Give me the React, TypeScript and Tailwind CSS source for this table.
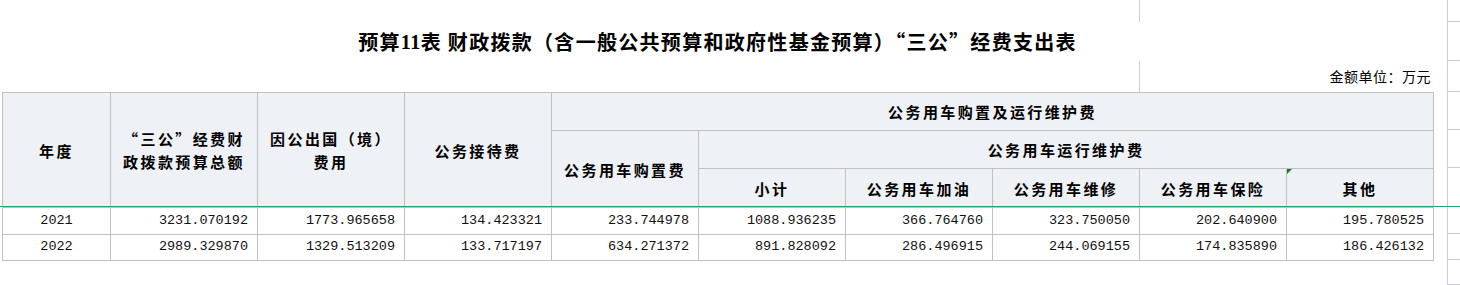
import React from "react";

const cjk = "font-['Noto_Sans_CJK_SC',sans-serif]";
const head = `${cjk} font-bold text-[15px] tracking-[2.4px] text-black text-center align-middle border border-[#c0c0c0] bg-[#eef1f6] leading-[23px]`;
const mono = "font-['Liberation_Mono','Noto_Sans_CJK_SC',monospace] text-[13.5px] text-[#111] border border-[#c0c0c0] align-middle";
const num = `${mono} pr-[9px] text-right`;
const year = `${mono} text-center`;

const rows = [
  ["2021", "3231.070192", "1773.965658", "134.423321", "233.744978", "1088.936235", "366.764760", "323.750050", "202.640900", "195.780525"],
  ["2022", "2989.329870", "1329.513209", "133.717197", "634.271372", "891.828092", "286.496915", "244.069155", "174.835890", "186.426132"],
];

// spreadsheet gridline stubs beyond the table, heights in px
const stubs = [22, 39, 31, 38, 38, 39, 27, 26, 25];

export default function App() {
  return (
    <div className="relative flex h-[285px] w-[1460px] overflow-hidden bg-white">
      <div className="w-[1447px] shrink-0">
        <div className="flex h-[22px]">
          <div className="w-[1139px]" />
          <div className="flex-1 border-l border-[#c8ccd9]" />
        </div>
        <div className={`ml-[2px] flex h-[39px] w-[1431px] items-center justify-center ${cjk} text-[20px] font-bold tracking-[1.3px] text-black`}>
          预算<span className="font-['Liberation_Serif',serif] tracking-[0.5px]">11</span>表 财政拨款（含一般公共预算和政府性基金预算）“三公”经费支出表
        </div>
        <div className="flex h-[31px]">
          <div className="w-[1139px]" />
          <div className={`flex flex-1 items-center justify-end border-l border-[#c8ccd9] pr-[16px] ${cjk} text-[14px] tracking-[0.5px] text-black`}>
            金额单位：万元
          </div>
        </div>
        <table className="ml-[2px] w-[1432px] table-fixed border-collapse">
          <colgroup>
            <col className="w-[108px]" />
            {Array.from({ length: 9 }).map((_, i) => (
              <col key={i} className="w-[147px]" />
            ))}
          </colgroup>
          <thead>
            <tr className="h-[38px]">
              <th rowSpan={3} className={head}>年度</th>
              <th rowSpan={3} className={head}>“三公”经费财<br />政拨款预算总额</th>
              <th rowSpan={3} className={head}>因公出国（境）<br />费用</th>
              <th rowSpan={3} className={head}>公务接待费</th>
              <th colSpan={6} className={head}>公务用车购置及运行维护费</th>
            </tr>
            <tr className="h-[38px]">
              <th rowSpan={2} className={head}>公务用车购置费</th>
              <th colSpan={5} className={head}>公务用车运行维护费</th>
            </tr>
            <tr className="h-[39px]">
              <th className={head}>小计</th>
              <th className={head}>公务用车加油</th>
              <th className={head}>公务用车维修</th>
              <th className={head}>公务用车保险</th>
              <th className={`${head} relative`}>
                <span className="absolute left-0 top-0 h-0 w-0 border-r-[5px] border-t-[5px] border-r-transparent border-t-[#1d7a22]" />
                其他
              </th>
            </tr>
          </thead>
          <tbody>
            {rows.map((r, ri) => (
              <tr key={r[0]} className={ri === 0 ? "h-[27px]" : "h-[26px]"}>
                {r.map((v, i) => (
                  <td key={i} className={i === 0 ? year : num}>{v}</td>
                ))}
              </tr>
            ))}
          </tbody>
        </table>
      </div>
      <div className="flex flex-1 flex-col border-l border-[#c8ccd9]">
        {stubs.map((h, i) => (
          <div key={i} style={{ height: h }} className="shrink-0 border-b border-[#c8ccd9]" />
        ))}
      </div>
      <div className="absolute left-0 right-0 top-[206px] h-px bg-[#25a570]" />
    </div>
  );
}
